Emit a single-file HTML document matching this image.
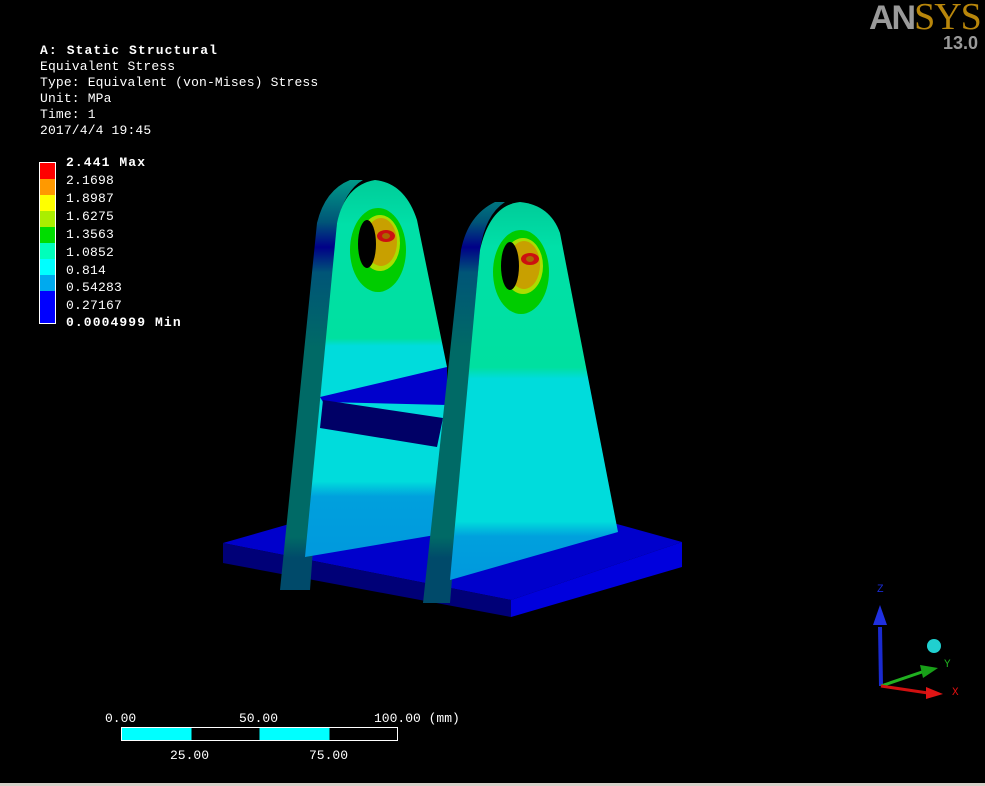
<!DOCTYPE html>
<html><head><meta charset="utf-8"><style>
html,body{margin:0;padding:0;background:#000;width:985px;height:786px;overflow:hidden;position:relative;font-family:"Liberation Mono","WenQuanYi Zen Hei",monospace;color:#fff}
.t{position:absolute;font-size:13px;line-height:16px;white-space:pre}
.b{font-weight:bold;letter-spacing:1.1px}
</style></head><body>
<div class="t b" style="left:40px;top:43px">A: Static Structural</div>
<div class="t" style="left:40px;top:59px;letter-spacing:0.15px">Equivalent Stress
Type: Equivalent (von-Mises) Stress
Unit: MPa
Time: 1
2017/4/4 19:45</div>

<div style="position:absolute;left:39px;top:162px;width:17px;height:162px;border:1px solid #fff;box-sizing:border-box;background:linear-gradient(#f00 0 10%,#f90 10% 20%,#ff0 20% 30%,#ae0 30% 40%,#0d0 40% 50%,#0fb 50% 60%,#0ff 60% 70%,#0ae 70% 80%,#00f 80%)"></div>
<div class="t b" style="left:66px;top:155px">2.441 Max</div>
<div class="t" style="left:66px;top:172px;line-height:17.9px;letter-spacing:0.2px">2.1698
1.8987
1.6275
1.3563
1.0852
0.814
0.54283
0.27167</div>
<div class="t b" style="left:66px;top:315px">0.0004999 Min</div>

<div style="position:absolute;left:869px;top:-2px;font-family:'Liberation Serif',serif;font-size:38px;line-height:38px;letter-spacing:-1px"><span style="color:#9a9a9a;font-family:'Liberation Sans',sans-serif;font-weight:bold;font-size:34px;letter-spacing:-2px">AN</span><span style="color:#b8860b">SYS</span></div>
<div style="position:absolute;left:943px;top:33px;font-family:'Liberation Sans',sans-serif;font-weight:bold;font-size:18px;color:#9a9a9a">13.0</div>

<svg width="985" height="786" style="position:absolute;left:0;top:0">
<defs>
<linearGradient id="g1" x1="0" y1="180" x2="0" y2="557" gradientUnits="userSpaceOnUse">
<stop offset="0" stop-color="#00cc99"/><stop offset=".12" stop-color="#00e0a8"/><stop offset=".42" stop-color="#00e0a0"/><stop offset=".44" stop-color="#00dcdc"/><stop offset=".8" stop-color="#00dcdc"/><stop offset=".84" stop-color="#00a0dd"/><stop offset="1" stop-color="#0099dd"/></linearGradient>
<linearGradient id="g2" x1="0" y1="202" x2="0" y2="578" gradientUnits="userSpaceOnUse">
<stop offset="0" stop-color="#00cc99"/><stop offset=".12" stop-color="#00e0a8"/><stop offset=".44" stop-color="#00e0a0"/><stop offset=".47" stop-color="#00dcdc"/><stop offset=".85" stop-color="#00dcdc"/><stop offset=".89" stop-color="#00a0dd"/><stop offset="1" stop-color="#0099dd"/></linearGradient>
<linearGradient id="s1" x1="0" y1="180" x2="0" y2="600" gradientUnits="userSpaceOnUse">
<stop offset="0" stop-color="#009a88"/><stop offset=".1" stop-color="#005577"/><stop offset=".16" stop-color="#000088"/><stop offset=".22" stop-color="#005577"/><stop offset=".4" stop-color="#006a66"/><stop offset=".85" stop-color="#006a66"/><stop offset=".9" stop-color="#004a6a"/><stop offset="1" stop-color="#004a6a"/></linearGradient>
</defs>
<polygon points="223,543 450,478 682,542 511,600" fill="#0000cc"/>
<polygon points="223,543 511,600 511,617 223,563" fill="#000077"/>
<polygon points="511,600 682,542 682,567 511,617" fill="#0000dd"/>
<path d="M317,223 Q325,190 350,180 L363,180 Q345,190 337,223 L310,590 L280,590 Z" fill="url(#s1)"/>
<path d="M337,223 Q345,185 375,180 Q405,183 417,220 L447,367 L447,533 L305,557 Z" fill="url(#g1)"/>
<polygon points="320,397 447,367 447,405 323,402" fill="#0000cc"/>
<polygon points="323,400 443,418 437,447 320,428" fill="#000066"/>
<ellipse cx="378" cy="250" rx="28" ry="42" fill="#00cc00"/>
<ellipse cx="380" cy="243" rx="20" ry="28" fill="#aadd00"/>
<ellipse cx="381" cy="242" rx="16" ry="24" fill="#c8a000"/>
<ellipse cx="386" cy="236" rx="9" ry="6" fill="#cc1010"/>
<ellipse cx="386" cy="236" rx="4" ry="3" fill="#aa6600"/>
<ellipse cx="367" cy="244" rx="9" ry="24" fill="#000"/>
<path d="M461,250 Q468,215 495,202 L505,202 Q485,215 480,250 L450,603 L423,603 Z" fill="url(#s1)"/>
<path d="M480,250 Q490,205 520,202 Q550,205 560,233 L618,532 L450,580 Z" fill="url(#g2)"/>
<ellipse cx="521" cy="272" rx="28" ry="42" fill="#00cc00"/>
<ellipse cx="523" cy="266" rx="20" ry="28" fill="#aadd00"/>
<ellipse cx="524" cy="265" rx="16" ry="24" fill="#c8a000"/>
<ellipse cx="530" cy="259" rx="9" ry="6" fill="#cc1010"/>
<ellipse cx="530" cy="259" rx="4" ry="3" fill="#aa6600"/>
<ellipse cx="510" cy="266" rx="9" ry="24" fill="#000"/>
<polygon points="879,686 883,686 882,627 878,627" fill="#1a2ad0"/>
<polygon points="880,605 873,625 887,625" fill="#2030e0"/>
<line x1="881" y1="686" x2="922" y2="672" stroke="#20b020" stroke-width="3"/>
<polygon points="938,668 920,665 923,678" fill="#18a018"/>
<line x1="881" y1="686" x2="928" y2="693" stroke="#d01010" stroke-width="3"/>
<polygon points="943,694 926,687 926,699" fill="#e01515"/>
<circle cx="934" cy="646" r="7" fill="#20d0d0"/>
<text x="877" y="592" fill="#1a2ad0" font-size="11" font-family="Liberation Mono">Z</text>
<text x="944" y="667" fill="#20b020" font-size="11" font-family="Liberation Mono">Y</text>
<text x="952" y="695" fill="#e01010" font-size="11" font-family="Liberation Mono">X</text>
</svg>

<div class="t" style="left:105px;top:711px">0.00</div>
<div class="t" style="left:239px;top:711px">50.00</div>
<div class="t" style="left:374px;top:711px">100.00 (mm)</div>
<div style="position:absolute;left:121px;top:727px;width:277px;height:14px;border:1px solid #fff;box-sizing:border-box;background:linear-gradient(90deg,#0ff 0 25.3%,#000 25.3% 50%,#0ff 50% 75.5%,#000 75.5%)"></div>
<div class="t" style="left:170px;top:748px">25.00</div>
<div class="t" style="left:309px;top:748px">75.00</div>
<div style="position:absolute;left:0;top:783px;width:985px;height:3px;background:#d4d0c8"></div>
</body></html>
